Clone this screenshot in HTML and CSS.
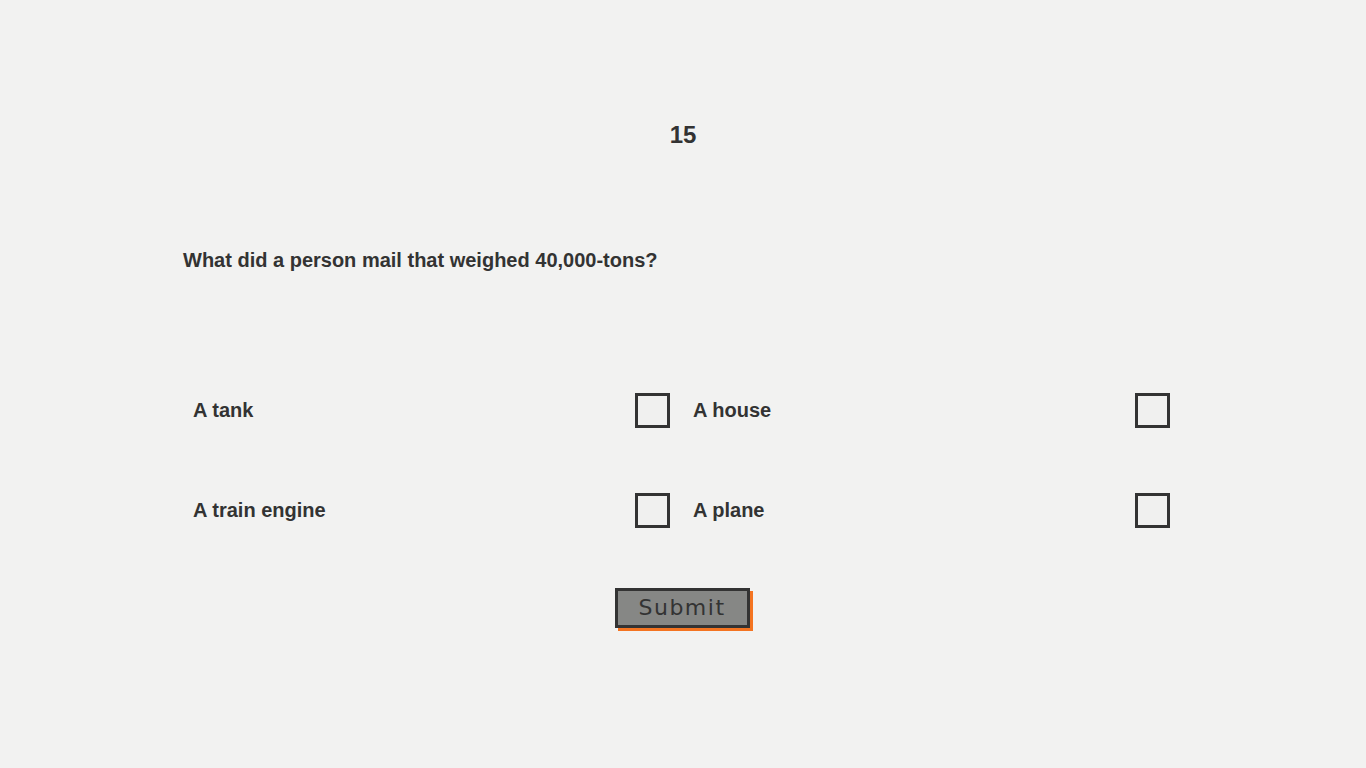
FILE: index.html
```html
<!DOCTYPE html>
<html>
<head>
<meta charset="utf-8">
<link rel="stylesheet" href="styles.css">
</head>
<body>
<main class="quiz">
  <h1 class="counter">15</h1>
  <p class="question">What did a person mail that weighed 40,000-tons?</p>
  <div class="options">
    <label class="option"><span class="option-text">A tank</span><span class="box"></span></label>
    <label class="option"><span class="option-text">A house</span><span class="box"></span></label>
    <label class="option"><span class="option-text">A train engine</span><span class="box"></span></label>
    <label class="option"><span class="option-text">A plane</span><span class="box"></span></label>
  </div>
  <div class="actions">
    <button class="submit" type="button">Submit</button>
  </div>
</main>
</body>
</html>
```
FILE: styles.css
```css
html, body {
  margin: 0;
  padding: 0;
  background: #f2f2f1;
}
body {
  font-family: "Liberation Sans", Arial, sans-serif;
  color: #333333;
  min-height: 768px;
}
.quiz {
  width: 1000px;
  margin: 0 auto;
  padding-top: 120px;
  padding-bottom: 60px;
}
.counter {
  margin: 0;
  text-align: center;
  font-size: 24px;
  line-height: 30px;
  font-weight: bold;
}
.question {
  margin: 96px 0 0 0;
  font-size: 20px;
  line-height: 28px;
  font-weight: bold;
}
.options {
  margin-top: 119px;
  display: grid;
  grid-template-columns: 1fr 1fr;
  row-gap: 65px;
}
.option {
  display: flex;
  align-items: center;
  justify-content: space-between;
  padding: 0 13px 0 10px;
  height: 35px;
}
.option-text {
  font-size: 20px;
  font-weight: bold;
}
.box {
  width: 29px;
  height: 29px;
  border: 3px solid #333333;
  background: #f0f0ef;
}
.actions {
  display: flex;
  justify-content: center;
  margin-top: 60px;
}
.submit {
  width: 135px;
  height: 40px;
  margin-right: 2px;
  border: 3px solid #333333;
  background: #868785;
  box-shadow: 3px 3px 0 #f47421;
  color: #333333;
  font-family: "DejaVu Sans", sans-serif;
  font-size: 22px;
  letter-spacing: 1.5px;
  padding: 0;
  line-height: 32px;
}
```
